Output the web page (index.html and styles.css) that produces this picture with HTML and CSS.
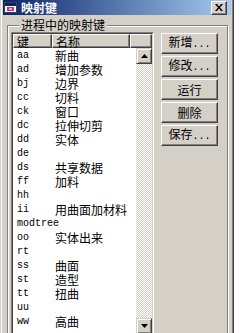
FILE: index.html
```html
<!DOCTYPE html>
<html lang="zh-CN">
<head>
<meta charset="UTF-8">
<meta name="viewport" content="width=device-width, initial-scale=1.0">
<title>映射键</title>
<link rel="stylesheet" href="styles.css">
</head>
<body>
<div class="window">
    <div class="titlebar">
        <svg class="app-icon" width="14" height="13" viewBox="0 0 14 13">
            <rect x="0.5" y="1.5" width="12" height="10" fill="#fff" stroke="#404040"/>
            <rect x="1" y="2" width="11" height="3" fill="#0a246a"/>
            <rect x="3" y="6" width="7" height="4" fill="#c0308c"/>
            <rect x="5" y="7" width="3" height="2" fill="#f0a0d8"/>
        </svg>
        <span class="title">映射键</span>
        <button class="close">
            <svg width="8" height="7" viewBox="0 0 8 7">
                <path d="M0 0h2l2 2.5 2-2.5h2l-3 3.5 3 3.5h-2l-2-2.5-2 2.5h-2l3-3.5z" fill="#000"/>
            </svg>
        </button>
    </div>

    <fieldset class="group">
        <legend>进程中的映射键</legend>
        <div class="group-body">
            <div class="list">
                <div class="list-inner">
                    <div class="list-header">
                        <div class="hcell col-key">键</div>
                        <div class="hcell col-name">名称</div>
                        <div class="hcell col-rest"></div>
                    </div>
                    <div class="list-body">
                        <div class="rows">
                            <div class="row"><span class="key">aa</span><span class="name">新曲</span></div>
                            <div class="row"><span class="key">ad</span><span class="name">增加参数</span></div>
                            <div class="row"><span class="key">bj</span><span class="name">边界</span></div>
                            <div class="row"><span class="key">cc</span><span class="name">切料</span></div>
                            <div class="row"><span class="key">ck</span><span class="name">窗口</span></div>
                            <div class="row"><span class="key">dc</span><span class="name">拉伸切剪</span></div>
                            <div class="row"><span class="key">dd</span><span class="name">实体</span></div>
                            <div class="row"><span class="key">de</span><span class="name"></span></div>
                            <div class="row"><span class="key">ds</span><span class="name">共享数据</span></div>
                            <div class="row"><span class="key">ff</span><span class="name">加料</span></div>
                            <div class="row"><span class="key">hh</span><span class="name"></span></div>
                            <div class="row"><span class="key">ii</span><span class="name">用曲面加材料</span></div>
                            <div class="row"><span class="key">modtree</span><span class="name"></span></div>
                            <div class="row"><span class="key">oo</span><span class="name">实体出来</span></div>
                            <div class="row"><span class="key">rt</span><span class="name"></span></div>
                            <div class="row"><span class="key">ss</span><span class="name">曲面</span></div>
                            <div class="row"><span class="key">st</span><span class="name">造型</span></div>
                            <div class="row"><span class="key">tt</span><span class="name">扭曲</span></div>
                            <div class="row"><span class="key">uu</span><span class="name"></span></div>
                            <div class="row"><span class="key">ww</span><span class="name">高曲</span></div>
                        </div>
                        <div class="scrollbar">
                            <div class="sb-btn">
                                <svg width="7" height="4" viewBox="0 0 7 4"><path d="M3.5 0L7 4H0z" fill="#000"/></svg>
                            </div>
                            <div class="sb-track"></div>
                            <div class="sb-btn">
                                <svg width="7" height="4" viewBox="0 0 7 4"><path d="M0 0h7L3.5 4z" fill="#000"/></svg>
                            </div>
                        </div>
                    </div>
                </div>
            </div>

            <div class="buttons">
                <button class="btn">新增<span class="dots">...</span></button>
                <button class="btn">修改<span class="dots">...</span></button>
                <button class="btn">运行</button>
                <button class="btn">删除</button>
                <button class="btn">保存<span class="dots">...</span></button>
            </div>
        </div>
    </fieldset>
</div>
</body>
</html>
```

FILE: styles.css
```css
html, body {
    margin: 0;
    height: 100%;
    overflow: hidden;
    background: #fff;
}

body {
    font-family: "Noto Sans CJK SC", sans-serif;
    font-size: 12px;
    color: #000;
}

.window {
    box-sizing: border-box;
    width: 234px;
    height: 345px;
    padding: 0 3px;
    background: #d4d0c8;
    box-shadow: inset 1px 0 #d4d0c8, inset 2px 0 #fff, inset -1px 0 #404040, inset -2px 0 #808080;
}

/* title bar */
.titlebar {
    display: flex;
    align-items: center;
    height: 15px;
    margin-bottom: 3px;
    padding: 0 4px 0 1px;
    background: linear-gradient(to right, #0a246a, #a6caf0);
}

.app-icon {
    flex: none;
    margin-right: 3px;
}

.title {
    flex: 1;
    color: #fff;
    font-weight: bold;
    line-height: 15px;
}

.close {
    box-sizing: border-box;
    display: flex;
    align-items: center;
    justify-content: center;
    width: 16px;
    height: 14px;
    padding: 0;
    background: #d4d0c8;
    border: 1px solid;
    border-color: #fff #404040 #404040 #fff;
    box-shadow: inset -1px -1px #808080;
}

/* group box */
.group {
    box-sizing: border-box;
    width: 221px;
    margin: 0 0 0 4px;
    padding: 0;
    border: 1px solid #808080;
    box-shadow: inset 1px 1px #fff, 1px 1px #fff;
    min-width: 0;
}

.group legend {
    margin-left: 11px;
    padding: 0 2px;
    line-height: 14px;
    background: #d4d0c8;
}

.group-body {
    display: flex;
    align-items: flex-start;
    padding: 0 9px 0 3px;
}

/* list view */
.list {
    box-sizing: border-box;
    width: 143px;
    border: 1px solid;
    border-color: #808080 #fff #fff #808080;
}

.list-inner {
    border: 1px solid;
    border-color: #404040 #d4d0c8 #d4d0c8 #404040;
    background: #fff;
}

.list-header {
    display: flex;
    height: 14px;
}

.hcell {
    box-sizing: border-box;
    height: 14px;
    padding-left: 3px;
    line-height: 13px;
    background: #d4d0c8;
    border: 1px solid;
    border-color: #fff #404040 #404040 #fff;
    box-shadow: inset -1px -1px #808080;
}

.col-key { width: 39px; }
.col-name { width: 78px; }
.col-rest { flex: 1; }

.list-body {
    display: flex;
    height: 286px;
}

.rows {
    flex: 1;
    padding-top: 1px;
    overflow: hidden;
}

.row {
    display: flex;
    height: 14px;
    line-height: 14px;
    white-space: nowrap;
}

.key {
    width: 35px;
    padding-left: 4px;
    font-family: "Liberation Mono", monospace;
    font-size: 10px;
}

.name {
    padding-left: 3px;
}

.scrollbar {
    display: flex;
    flex-direction: column;
    width: 16px;
}

.sb-btn {
    box-sizing: border-box;
    display: flex;
    align-items: center;
    justify-content: center;
    height: 16px;
    background: #d4d0c8;
    border: 1px solid;
    border-color: #d4d0c8 #404040 #404040 #d4d0c8;
    box-shadow: inset 1px 1px #fff, inset -1px -1px #808080;
}

.sb-track {
    flex: 1;
    background: repeating-conic-gradient(#d4d0c8 0 25%, #fff 0 50%) 0 0 / 2px 2px;
}

/* command buttons */
.buttons {
    display: flex;
    flex-direction: column;
    gap: 2px;
    margin-left: 7px;
    padding-top: 1px;
}

.btn {
    box-sizing: border-box;
    width: 57px;
    height: 21px;
    padding: 0;
    font-family: "Noto Sans CJK SC", sans-serif;
    font-size: 12px;
    line-height: 12px;
    color: #000;
    background: #d4d0c8;
    border: 1px solid;
    border-color: #fff #404040 #404040 #fff;
    box-shadow: inset -1px -1px #808080;
}

.dots {
    font-family: "Liberation Mono", monospace;
    font-size: 10px;
}
```
